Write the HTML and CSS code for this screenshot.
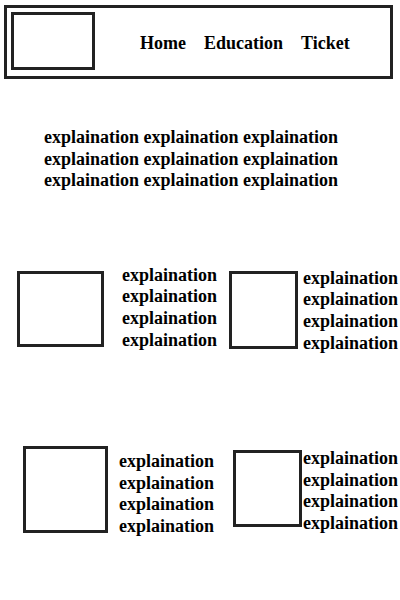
FILE: index.html
```html
<!DOCTYPE html>
<html lang="en">
<head>
  <meta charset="UTF-8">
  <meta name="viewport" content="width=device-width, initial-scale=1.0">
  <title>Wireframe</title>
  <link rel="stylesheet" href="styles.css">
</head>
<body>

  <!-- top bar -->
  <header class="topbar">
    <div class="logo"></div>
    <nav class="menu">
      <a href="#">Home</a>
      <a href="#">Education</a>
      <a href="#">Ticket</a>
    </nav>
  </header>

  <p class="intro">explaination explaination explaination explaination explaination explaination explaination explaination explaination</p>

  <!-- cards -->
  <div class="row row-one">
    <div class="card card-a">
      <div class="pic"></div>
      <p class="text">explaination<br>explaination<br>explaination<br>explaination</p>
    </div>
    <div class="card card-b">
      <div class="pic"></div>
      <p class="text">explaination<br>explaination<br>explaination<br>explaination</p>
    </div>
  </div>

  <div class="row row-two">
    <div class="card card-c">
      <div class="pic"></div>
      <p class="text">explaination<br>explaination<br>explaination<br>explaination</p>
    </div>
    <div class="card card-d">
      <div class="pic"></div>
      <p class="text">explaination<br>explaination<br>explaination<br>explaination</p>
    </div>
  </div>

</body>
</html>
```

FILE: styles.css
```css
body {
  font-family: 'Liberation Serif', 'Times New Roman', serif;
  font-weight: bold;
  font-size: 18px;
  line-height: 1.2;
  color: #000;
  background: #fff;
  margin: 0;
  padding: 0;
}

p {
  margin: 0;
}

.topbar {
  display: flex;
  align-items: flex-start;
  width: 383px;
  height: 68px;
  margin: 5px 0 0 4px;
  border: 3px solid #222;
}

.logo {
  width: 78px;
  height: 52px;
  margin: 4px 0 0 4px;
  border: 3px solid #222;
}

.menu {
  display: flex;
  gap: 18px;
  margin: 25px 0 0 45px;
}

.menu a {
  color: #000;
  text-decoration: none;
}

.intro {
  width: 300px;
  margin: 48px 0 0 44px;
}

.row {
  display: flex;
}

.row-one {
  margin-top: 73px;
}

.row-two {
  margin-top: 92px;
}

.card {
  display: flex;
  align-items: flex-start;
}

.pic {
  border: 3px solid #222;
}

.card-a {
  margin-left: 17px;
  gap: 18px;
}
.card-a .pic {
  width: 81px;
  height: 70px;
  margin-top: 6px;
}

.card-b {
  margin-left: 12px;
  gap: 5px;
}
.card-b .pic {
  width: 63px;
  height: 72px;
  margin-top: 6px;
}
.card-b .text {
  margin-top: 3px;
}

.card-c {
  margin-left: 23px;
  gap: 11px;
}
.card-c .pic {
  width: 79px;
  height: 81px;
}
.card-c .text {
  margin-top: 5px;
}

.card-d {
  margin-left: 19px;
  gap: 1px;
}
.card-d .pic {
  width: 63px;
  height: 71px;
  margin-top: 4px;
}
.card-d .text {
  margin-top: 2px;
}
```
